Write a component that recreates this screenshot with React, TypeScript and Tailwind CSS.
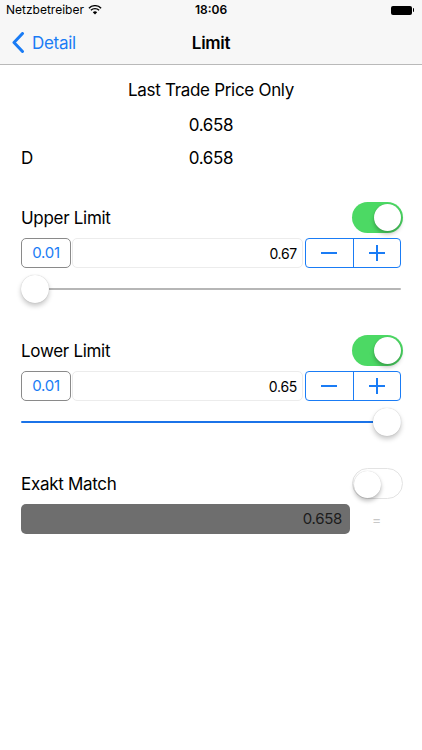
import React from "react";

const font = { fontFamily: "Inter, 'Liberation Sans', Arial, sans-serif" };

function Toggle({ on }: { on: boolean }) {
  return (
    <div
      className={`relative -mr-[2px] h-[31px] w-[51px] rounded-full ${
        on ? "bg-[#4cd964]" : "bg-white border border-[#e3e3e3]"
      }`}
    >
      <div
        className={`absolute top-[2px] h-[27px] w-[27px] rounded-full bg-white shadow-[0_3px_4px_rgba(0,0,0,0.25),0_0_1px_rgba(0,0,0,0.2)] ${
          on ? "right-[2px]" : "left-[1px] top-[1px]"
        }`}
      />
    </div>
  );
}

function Slider({ value }: { value: "min" | "max" }) {
  const atMax = value === "max";
  return (
    <div className="relative h-[42px]">
      <div
        className={`absolute left-0 right-0 top-[20px] h-[2px] rounded ${
          atMax ? "bg-[#1b73e8]" : "bg-[#b6b6b6]"
        }`}
      />
      <div
        className={`absolute top-[7px] h-[28px] w-[28px] rounded-full bg-white shadow-[0_3px_5px_rgba(0,0,0,0.22),0_0_1px_rgba(0,0,0,0.25)] ${
          atMax ? "right-0" : "left-0"
        }`}
      />
    </div>
  );
}

function LimitSection({ title, value, slider }: { title: string; value: string; slider: "min" | "max" }) {
  return (
    <section className="mb-[25px]">
      <div className="flex h-[31px] items-center justify-between">
        <span className="pt-[3px] text-[17px] tracking-[-0.3px] text-black">{title}</span>
        <Toggle on />
      </div>
      <div className="mt-[5px] flex h-[30px] items-stretch">
        <div className="flex w-[50px] items-center justify-center rounded-[5px] border-[1.5px] border-[#8a8a8a] pt-[1px] text-[15px] text-[#1a7cf5]">
          0.01
        </div>
        <div className="ml-[1px] flex flex-1 items-center justify-end rounded-[5px] border border-[#ececec] pr-[5px] pt-[1px] text-[14px] text-black">
          {value}
        </div>
        <div className="ml-[2px] flex w-[96px] rounded-[4px] border border-[#1a7cf5]">
          <div className="flex flex-1 items-center justify-center border-r border-[#1a7cf5]">
            <div className="h-[1.5px] w-[16px] bg-[#1a7cf5]" />
          </div>
          <div className="relative flex flex-1 items-center justify-center">
            <div className="h-[1.5px] w-[16px] bg-[#1a7cf5]" />
            <div className="absolute h-[16px] w-[1.5px] bg-[#1a7cf5]" />
          </div>
        </div>
      </div>
      <Slider value={slider} />
    </section>
  );
}

export default function App() {
  return (
    <div className="h-[750px] w-[422px] bg-white" style={font}>
      {/* status + nav bar */}
      <div className="bg-[#f7f7f7] border-b border-[#b9b9b9]">
        <div className="relative flex h-[20px] items-center px-[6px] text-[12px] text-black">
          <span>Netzbetreiber</span>
          <svg className="ml-[4px]" width="14" height="10" viewBox="0 0 14 10">
            <path d="M7 9.5 L4.8 7.2 A3.2 3.2 0 0 1 9.2 7.2 Z" fill="black" />
            <path d="M2.9 5.3 A5.8 5.8 0 0 1 11.1 5.3" stroke="black" strokeWidth="1.4" fill="none" />
            <path d="M0.9 3.2 A8.6 8.6 0 0 1 13.1 3.2" stroke="black" strokeWidth="1.4" fill="none" />
          </svg>
          <span className="absolute left-1/2 -translate-x-1/2 font-semibold">18:06</span>
          <div className="ml-auto mr-[2px] flex items-center">
            <div className="h-[9px] w-[21px] rounded-[2px] bg-black" />
            <div className="ml-[1px] h-[4px] w-[1.5px] rounded-r bg-black" />
          </div>
        </div>
        <div className="relative flex h-[44px] items-center pt-[3px]">
          <div className="flex items-center pl-[12px] text-[17px] tracking-[-0.3px] text-[#1a7cf5]">
            <svg width="13" height="21" viewBox="0 0 13 21" className="-mt-[2px]">
              <path d="M10.5 1.5 L2 10.5 L10.5 19.5" stroke="#1a7cf5" strokeWidth="3" fill="none" strokeLinejoin="round" strokeLinecap="round" />
            </svg>
            <span className="ml-[7px]">Detail</span>
          </div>
          <span className="absolute left-1/2 -translate-x-1/2 text-[17px] font-semibold tracking-[-0.3px] text-black">Limit</span>
        </div>
      </div>

      <main className="px-[21px] pt-[12px] text-[17px] tracking-[-0.3px] text-black">
        <div className="flex h-[24px] items-center justify-center pt-[3px]">Last Trade Price Only</div>
        <div className="mt-[12px] flex h-[24px] items-center justify-center pt-[2px]">0.658</div>
        <div className="relative mt-[9px] flex h-[24px] items-center justify-center pt-[2px]">
          <span className="absolute left-0">D</span>
          <span>0.658</span>
        </div>

        <div className="mt-[32px]">
          <LimitSection title="Upper Limit" value="0.67" slider="min" />
          <LimitSection title="Lower Limit" value="0.65" slider="max" />

          <section>
            <div className="flex h-[31px] items-center justify-between">
              <span className="pt-[3px]">Exakt Match</span>
              <Toggle on={false} />
            </div>
            <div className="mt-[5px] flex h-[30px] items-center">
              <div className="flex h-full w-[329px] items-center justify-end rounded-[5px] bg-[#6e6e6e] pr-[8px] pt-[1px] text-[15px] text-[#1c1c1c]">
                0.658
              </div>
              <span className="ml-[22px] text-[14px] text-[#c8c8c8]">=</span>
            </div>
          </section>
        </div>
      </main>
    </div>
  );
}
